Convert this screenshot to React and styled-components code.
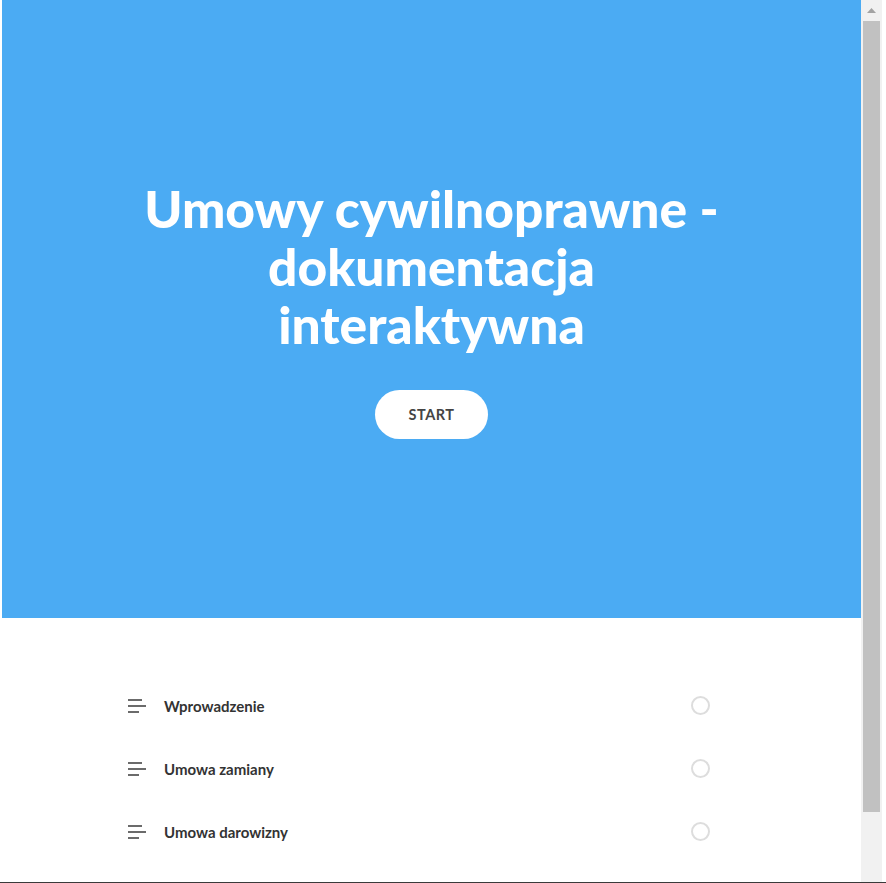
import styled, { createGlobalStyle } from 'styled-components';

const GlobalStyle = createGlobalStyle`
    html, body {
        margin: 0;
        padding: 0;
        background: #fff;
        font-family: Lato, 'Open Sans', sans-serif;
    }
`;

const items = ['Wprowadzenie', 'Umowa zamiany', 'Umowa darowizny'];

const MenuIcon = () => (
    <svg width="18" height="14" viewBox="0 0 18 14">
        <rect x="0" y="0" width="14" height="2" fill="#6b6b6b" />
        <rect x="0" y="6" width="18" height="2" fill="#6b6b6b" />
        <rect x="0" y="12" width="11" height="2" fill="#6b6b6b" />
    </svg>
);

const App = () => {
    return (
        <Page>
            <GlobalStyle />
            <Hero>
                <Title>Umowy cywilnoprawne - dokumentacja interaktywna</Title>
                <StartButton type="button">START</StartButton>
            </Hero>
            <ListSection>
                <List>
                    {items.map((item) => (
                        <Row key={item}>
                            <IconBox>
                                <MenuIcon />
                            </IconBox>
                            <RowLabel>{item}</RowLabel>
                            <Check />
                        </Row>
                    ))}
                </List>
            </ListSection>

            {/* page scrollbar as seen in the browser */}
            <ScrollBar>
                <ScrollArrow>
                    <svg width="9" height="5" viewBox="0 0 9 5">
                        <path d="M4.5 0 L9 5 L0 5 Z" fill="#a3a3a3" />
                    </svg>
                </ScrollArrow>
                <ScrollThumb />
            </ScrollBar>
            <BottomEdge />
        </Page>
    );
};

export default App;

const Page = styled.div`
    padding: 0 25px 0 2px;
`;

const Hero = styled.section`
    height: 618px;
    background-color: #4babf3;
    display: flex;
    flex-direction: column;
    align-items: center;
    justify-content: center;
`;

const Title = styled.h1`
    width: 610px;
    margin: 0 0 37px;
    color: #fff;
    font-family: Lato, sans-serif;
    font-weight: 900;
    font-size: 51.5px;
    line-height: 58px;
    text-align: center;
`;

const StartButton = styled.button`
    width: 113px;
    height: 49px;
    border: none;
    border-radius: 25px;
    background: #fff;
    color: #444;
    font-family: Lato, sans-serif;
    font-weight: 700;
    font-size: 14.5px;
    letter-spacing: 0.5px;
    cursor: pointer;
`;

const ListSection = styled.section`
    padding: 56px 0 99px;
`;

const List = styled.ul`
    list-style: none;
    margin: 0 auto;
    padding: 0 25px 0 0;
    width: 582px;
`;

const Row = styled.li`
    height: 63px;
    display: flex;
    align-items: center;
`;

const IconBox = styled.span`
    display: flex;
    width: 18px;
    margin-right: 18px;
`;

const RowLabel = styled.span`
    flex: 1;
    color: #333;
    font-family: Lato, sans-serif;
    font-weight: 700;
    font-size: 15px;
`;

const Check = styled.span`
    width: 15px;
    height: 15px;
    border: 2px solid #ddd;
    border-radius: 50%;
    margin-top: -1px;
`;

const ScrollBar = styled.div`
    position: fixed;
    top: 0;
    right: 0;
    bottom: 0;
    width: 21px;
    border-right: 4px solid #fff;
    background: #f1f1f1;
    display: flex;
    flex-direction: column;
    align-items: center;
`;

const ScrollArrow = styled.div`
    height: 21px;
    display: flex;
    align-items: center;
    justify-content: center;
    width: 100%;
`;

const ScrollThumb = styled.div`
    width: 17px;
    height: 791px;
    background: #c1c1c1;
`;

const BottomEdge = styled.div`
    position: fixed;
    left: 0;
    right: 0;
    bottom: 0;
    height: 1px;
    background: #3a3a3a;
`;
